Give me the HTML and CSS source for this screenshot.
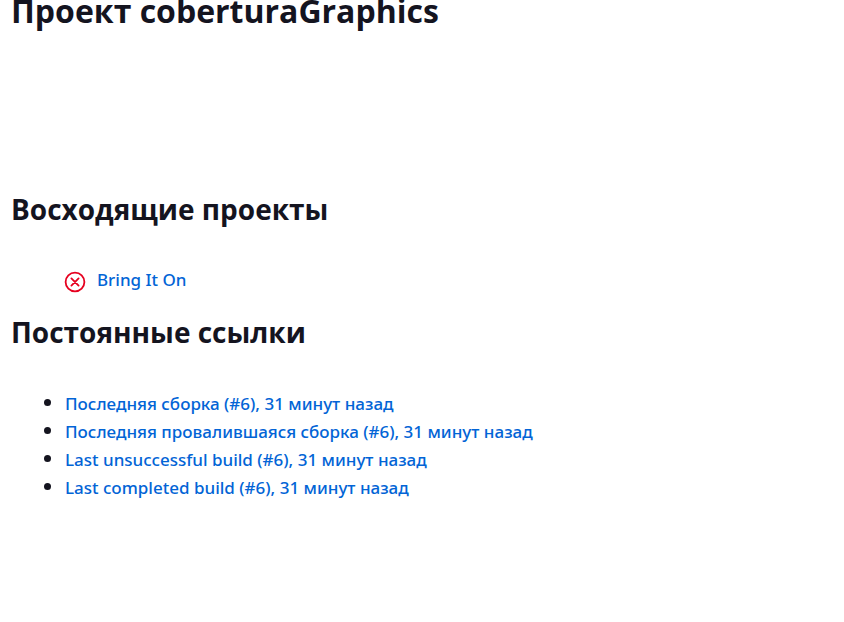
FILE: index.html
```html
<!DOCTYPE html>
<html lang="ru">
<head>
<meta charset="utf-8">
<title>Проект coberturaGraphics</title>
<link rel="stylesheet" href="styles.css">
</head>
<body>
<main class="project">
  <h1 class="project-title">Проект coberturaGraphics</h1>
  <section class="section">
    <h2 class="section-title">Восходящие проекты</h2>
    <ul class="upstream">
      <li class="upstream-item">
        <svg class="status-icon" viewBox="0 0 22 22" aria-hidden="true"><circle cx="11" cy="10" r="9.4"/><path d="M7.4 6.4l7.2 7.2M14.6 6.4l-7.2 7.2"/></svg>
        <a class="link" href="#">Bring It On</a>
      </li>
    </ul>
  </section>
  <section class="section">
    <h2 class="section-title">Постоянные ссылки</h2>
    <ul class="permalinks">
      <li><a class="link" href="#">Последняя сборка (#6), 31 минут назад</a></li>
      <li><a class="link" href="#">Последняя провалившаяся сборка (#6), 31 минут назад</a></li>
      <li><a class="link" href="#">Last unsuccessful build (#6), 31 минут назад</a></li>
      <li><a class="link" href="#">Last completed build (#6), 31 минут назад</a></li>
    </ul>
  </section>
</main>
</body>
</html>
```
FILE: styles.css
```css
body {
  margin: 0;
  background: #fff;
  color: #14141f;
  font-family: "Segoe UI", "Noto Sans", sans-serif;
  font-size: 17px;
  line-height: 28px;
}

.project {
  padding: 0 11px;
  overflow: hidden;
}

.project-title,
.section-title {
  font-family: "Segoe UI", "Open Sans", sans-serif;
  font-weight: 700;
}

.project-title {
  margin: -11px 0 160px;
  font-size: 32px;
  line-height: 44px;
}

.section-title {
  margin: 0 0 41px;
  font-size: 28px;
  line-height: 32px;
}

.upstream {
  margin: 0 0 22px;
  padding: 0 0 0 53px;
  list-style: none;
}

.upstream-item {
  display: flex;
  align-items: flex-end;
  gap: 11px;
}

.status-icon {
  width: 22px;
  height: 22px;
  overflow: visible;
  fill: none;
  stroke: #e6001f;
  stroke-width: 1.8;
  stroke-linecap: round;
}

.permalinks {
  margin: 0;
  padding: 0 0 0 54px;
  font-size: 20px;
  line-height: 27px;
}

.link {
  color: #0264d6;
  font-size: 17px;
  font-weight: 500;
  text-decoration: none;
}
```
